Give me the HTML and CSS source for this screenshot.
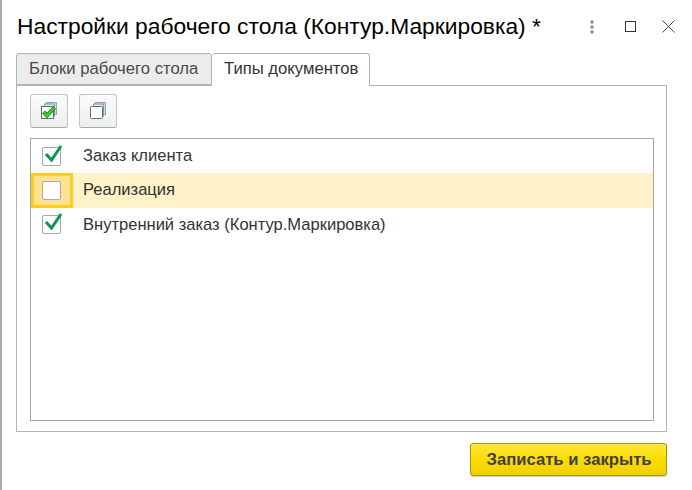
FILE: index.html
```html
<!DOCTYPE html>
<html lang="ru">
<head>
  <meta charset="UTF-8">
  <title>Настройки рабочего стола</title>
  <link rel="stylesheet" href="styles.css">
</head>
<body>
  <div class="window">
    <div class="title-bar">
      <h1 class="title">Настройки рабочего стола (Контур.Маркировка) *</h1>
      <div class="window-controls">
        <svg class="ctl-more" width="4" height="14" viewBox="0 0 4 14"><circle cx="2" cy="2" r="1.7" fill="#888"/><circle cx="2" cy="7" r="1.7" fill="#888"/><circle cx="2" cy="12" r="1.7" fill="#888"/></svg>
        <svg class="ctl-max" width="11" height="11" viewBox="0 0 11 11"><rect x="0.5" y="0.5" width="10" height="10" fill="none" stroke="#333"/></svg>
        <svg class="ctl-close" width="13" height="13" viewBox="0 0 13 13"><path d="M0.5 0.5 L12.5 12.5 M12.5 0.5 L0.5 12.5" stroke="#444" stroke-width="1" fill="none"/></svg>
      </div>
    </div>

    <div class="tabs">
      <div class="tab">Блоки рабочего стола</div>
      <div class="tab tab-active">Типы документов</div>
    </div>

    <div class="panel">
      <div class="toolbar">
        <button class="tool-btn">
          <svg width="20" height="20" viewBox="0 0 20 20">
            <rect x="7.5" y="1.5" width="10" height="12" fill="#cfdbe3" stroke="#8fa5b3"/>
            <rect x="5.5" y="3" width="10" height="12" fill="#dfe7ec" stroke="#7f98a8"/>
            <rect x="2.5" y="5.5" width="12" height="12" fill="#fff" stroke="#4d7186"/>
            <path d="M4.5 11 L8 14.5 L15.5 6.5" fill="none" stroke="#1d7d12" stroke-width="4"/>
            <path d="M4.5 11 L8 14.5 L15.5 6.5" fill="none" stroke="#3fcf2a" stroke-width="2.4"/>
          </svg>
        </button>
        <button class="tool-btn">
          <svg width="20" height="20" viewBox="0 0 20 20">
            <rect x="7.5" y="1.5" width="10" height="12" fill="#cfdbe3" stroke="#8fa5b3"/>
            <rect x="5.5" y="3" width="10" height="12" fill="#dfe7ec" stroke="#7f98a8"/>
            <rect x="2.5" y="5.5" width="12" height="12" rx="1" fill="#fff" stroke="#4d7186"/>
          </svg>
        </button>
      </div>

      <div class="list">
        <div class="row">
          <div class="check-cell">
            <span class="checkbox">
              <svg width="20" height="20" viewBox="0 0 20 20"><path d="M3 9 L8.5 15 L18 1" fill="none" stroke="#0f9650" stroke-width="3"/></svg>
            </span>
          </div>
          <span class="row-text">Заказ клиента</span>
        </div>
        <div class="row row-selected">
          <div class="check-cell check-cell-focus">
            <span class="checkbox"></span>
          </div>
          <span class="row-text">Реализация</span>
        </div>
        <div class="row">
          <div class="check-cell">
            <span class="checkbox">
              <svg width="20" height="20" viewBox="0 0 20 20"><path d="M3 9 L8.5 15 L18 1" fill="none" stroke="#0f9650" stroke-width="3"/></svg>
            </span>
          </div>
          <span class="row-text">Внутренний заказ (Контур.Маркировка)</span>
        </div>
      </div>
    </div>

    <div class="footer">
      <button class="save-btn">Записать и закрыть</button>
    </div>
  </div>
</body>
</html>
```

FILE: styles.css
```css
html, body {
  margin: 0;
  padding: 0;
  height: 100%;
  background: #fff;
  overflow: hidden;
}
body {
  font-family: "Liberation Sans", Arial, sans-serif;
  color: #333;
}
.window {
  box-sizing: border-box;
  width: 692px;
  height: 490px;
  border-left: 2px solid #aaa;
  padding: 0 25px 0 14px;
}
.title-bar {
  display: flex;
  align-items: center;
  justify-content: space-between;
  height: 53px;
}
.title {
  margin: 0 0 0 1px;
  font-size: 22.8px;
  font-weight: normal;
  color: #000;
  white-space: nowrap;
}
.window-controls {
  display: flex;
  align-items: center;
  margin-right: -8px;
}
.ctl-more {
  margin-right: 31px;
}
.ctl-max {
  margin-right: 26px;
}
.tabs {
  display: flex;
  position: relative;
  z-index: 1;
}
.tab {
  box-sizing: border-box;
  width: 196px;
  height: 32px;
  padding: 5px 12px 0;
  font-size: 16.67px;
  color: #4a4a4a;
  white-space: nowrap;
  background: #ececec;
  border: 1px solid #b3b3b3;
  border-radius: 3px 3px 0 0;
}
.tab-active {
  width: 158px;
  height: 33px;
  background: #fff;
  border-left: none;
  border-bottom: none;
  color: #333;
}
.panel {
  box-sizing: border-box;
  width: 651px;
  height: 347px;
  margin-top: -1px;
  padding: 8px 12px 9px 13px;
  border: 1px solid #b3b3b3;
}
.toolbar {
  display: flex;
  gap: 11px;
  margin-bottom: 10px;
}
.tool-btn {
  box-sizing: border-box;
  width: 38px;
  height: 34px;
  display: flex;
  align-items: center;
  justify-content: center;
  padding: 0;
  background: linear-gradient(#fbfbfb, #eeeeee);
  border: 1px solid #c4c4c4;
  border-bottom-color: #a9a9a9;
  border-radius: 3px;
}
.list {
  box-sizing: border-box;
  height: 283px;
  border: 1px solid #a5a5a5;
}
.row {
  display: flex;
  align-items: center;
  height: 34.33px;
  font-size: 16.55px;
}
.row-selected {
  background: #fdf2c8;
}
.check-cell {
  box-sizing: border-box;
  width: 42px;
  height: 100%;
  display: flex;
  align-items: center;
  padding-left: 11px;
}
.check-cell-focus {
  background: #ffe28f;
  border: 3px solid #fccb1f;
  padding-left: 8px;
}
.checkbox {
  box-sizing: border-box;
  position: relative;
  display: block;
  width: 19px;
  height: 19px;
  background: #fff;
  border: 1px solid #a8a8a8;
  border-radius: 2px;
}
.checkbox svg {
  position: absolute;
  left: 0;
  top: -3px;
}
.row-text {
  margin-left: 10px;
  white-space: nowrap;
}
.footer {
  display: flex;
  justify-content: flex-end;
  margin-top: 11px;
}
.save-btn {
  box-sizing: border-box;
  width: 197px;
  height: 33px;
  padding: 0 0 0 1px;
  font-family: inherit;
  font-size: 16.67px;
  font-weight: bold;
  color: #3f3f3f;
  background: linear-gradient(#fee63a, #fbdc00 50%, #efd000);
  border: 1px solid #ad9600;
  border-radius: 3px;
  box-shadow: 0 1px 1px #ccc;
}
```
